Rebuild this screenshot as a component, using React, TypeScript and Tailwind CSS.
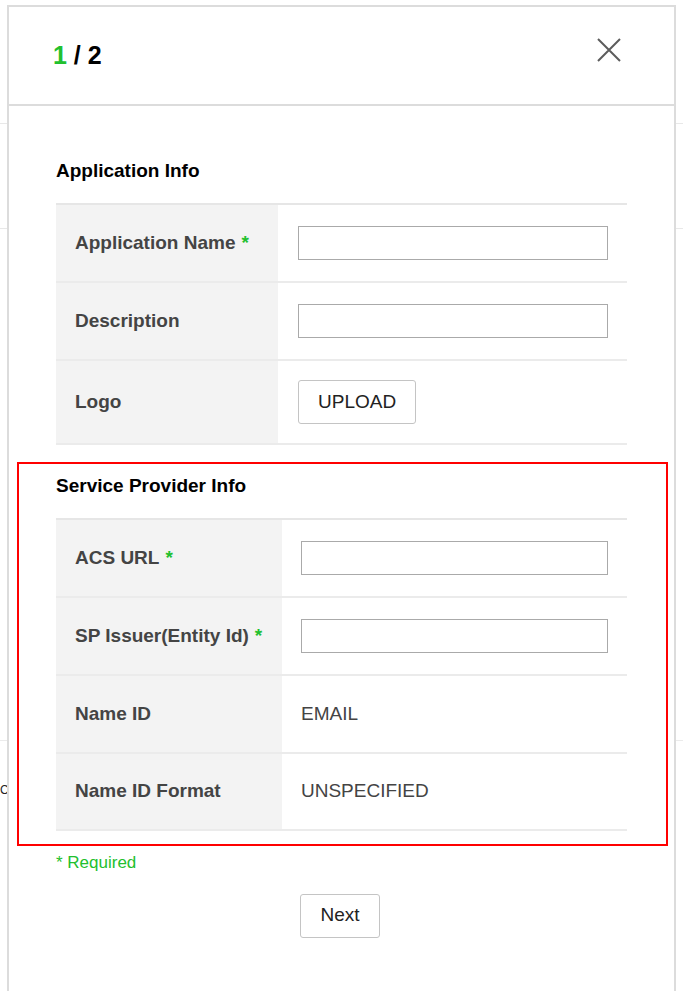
import type { ReactNode } from "react";

const font = { fontFamily: '"Liberation Sans", Arial, sans-serif' };

type Row = {
  label: string;
  required?: boolean;
  kind: "input" | "upload" | "text";
  value?: string;
};

const appRows: Row[] = [
  { label: "Application Name", required: true, kind: "input" },
  { label: "Description", kind: "input" },
  { label: "Logo", kind: "upload" },
];

const spRows: Row[] = [
  { label: "ACS URL", required: true, kind: "input" },
  { label: "SP Issuer(Entity Id)", required: true, kind: "input" },
  { label: "Name ID", kind: "text", value: "EMAIL" },
  { label: "Name ID Format", kind: "text", value: "UNSPECIFIED" },
];

function FieldValue({ row, inputWidth }: { row: Row; inputWidth: string }) {
  if (row.kind === "input") {
    return (
      <input
        type="text"
        className={`${inputWidth} h-[34px] border border-[#aaaaaa] bg-white outline-none`}
      />
    );
  }
  if (row.kind === "upload") {
    return (
      <button className="h-[44px] px-[19px] border border-[#c4c4c4] rounded-[3px] bg-white text-[19px] text-[#222]">
        UPLOAD
      </button>
    );
  }
  return <span className="text-[19px] text-[#444]">{row.value}</span>;
}

function FieldTable({
  rows,
  labelWidth,
  inputWidth,
  valuePad,
  heights,
}: {
  rows: Row[];
  labelWidth: string;
  inputWidth: string;
  valuePad: string;
  heights: string[];
}) {
  return (
    <div className="border-t-2 border-[#e6e6e6] w-[571px]">
      {rows.map((row, i) => (
        <div key={row.label} className={`flex border-b-2 border-[#ebebeb] ${heights[i]}`}>
          <div className={`${labelWidth} bg-[#f3f3f3] flex items-center pl-[19px]`}>
            <span className="text-[19px] font-bold text-[#444]">
              {row.label}
              {row.required && <span className="text-[#22c02e] ml-[6px]">*</span>}
            </span>
          </div>
          <div className={`flex-1 flex items-center ${valuePad}`}>
            <FieldValue row={row} inputWidth={inputWidth} />
          </div>
        </div>
      ))}
    </div>
  );
}

function Section({ title, children }: { title: string; children: ReactNode }) {
  return (
    <div>
      <h2 className="text-[19px] font-bold text-black leading-[22px] mb-[21px]">{title}</h2>
      {children}
    </div>
  );
}

export default function App() {
  return (
    <div style={font} className="relative w-[683px] h-[991px] bg-white overflow-hidden">
      {/* page underneath the dialog */}
      <div className="pt-[123px] flex flex-col">
        <div className="h-px bg-[#e8e8e8] w-full" />
        <div className="h-[104px]" />
        <div className="h-px bg-[#e8e8e8] w-full" />
        <div className="h-[511px]" />
        <div className="h-px bg-[#ebebeb] w-full" />
        <div className="h-[42px]" />
        <div className="text-[12px] leading-[14px] text-[#222]">C</div>
      </div>

      {/* dialog */}
      <div className="absolute left-[7px] top-[5px] w-[669px] h-[990px] bg-white border-2 border-[#dcdcdc]">
        <div className="h-[99px] border-b-2 border-[#dcdcdc] flex items-center justify-between pl-[44px] pr-[52px]">
          <div className="text-[25px] font-bold text-black">
            <span className="text-[#22c02e]">1</span> / 2
          </div>
          <svg width="26" height="26" viewBox="0 0 26 26" className="mb-[11px]">
            <path d="M2 2 L24 24 M24 2 L2 24" stroke="#5c5c5c" strokeWidth="2" fill="none" />
          </svg>
        </div>

        <div className="pt-[54px] pl-[47px]">
          <Section title="Application Info">
            <FieldTable
              rows={appRows}
              labelWidth="w-[222px]"
              inputWidth="w-[310px]"
              valuePad="pl-[20px]"
              heights={["h-[78px]", "h-[78px]", "h-[84px]"]}
            />
          </Section>
        </div>

        <div className="mt-[17px] ml-[8px] w-[651px] h-[384px] border-2 border-[#f00] pt-[11px] pl-[37px]">
          <Section title="Service Provider Info">
            <FieldTable
              rows={spRows}
              labelWidth="w-[226px]"
              inputWidth="w-[307px]"
              valuePad="pl-[19px]"
              heights={["h-[78px]", "h-[78px]", "h-[78px]", "h-[77px]"]}
            />
          </Section>
        </div>

        <div className="pl-[47px] mt-[4px] text-[17px] text-[#22c02e]">* Required</div>

        <div className="flex justify-center mt-[18px] pr-[3px]">
          <button className="h-[44px] px-[19px] border border-[#c4c4c4] rounded-[3px] bg-white text-[19px] text-[#222]">
            Next
          </button>
        </div>
      </div>
    </div>
  );
}
